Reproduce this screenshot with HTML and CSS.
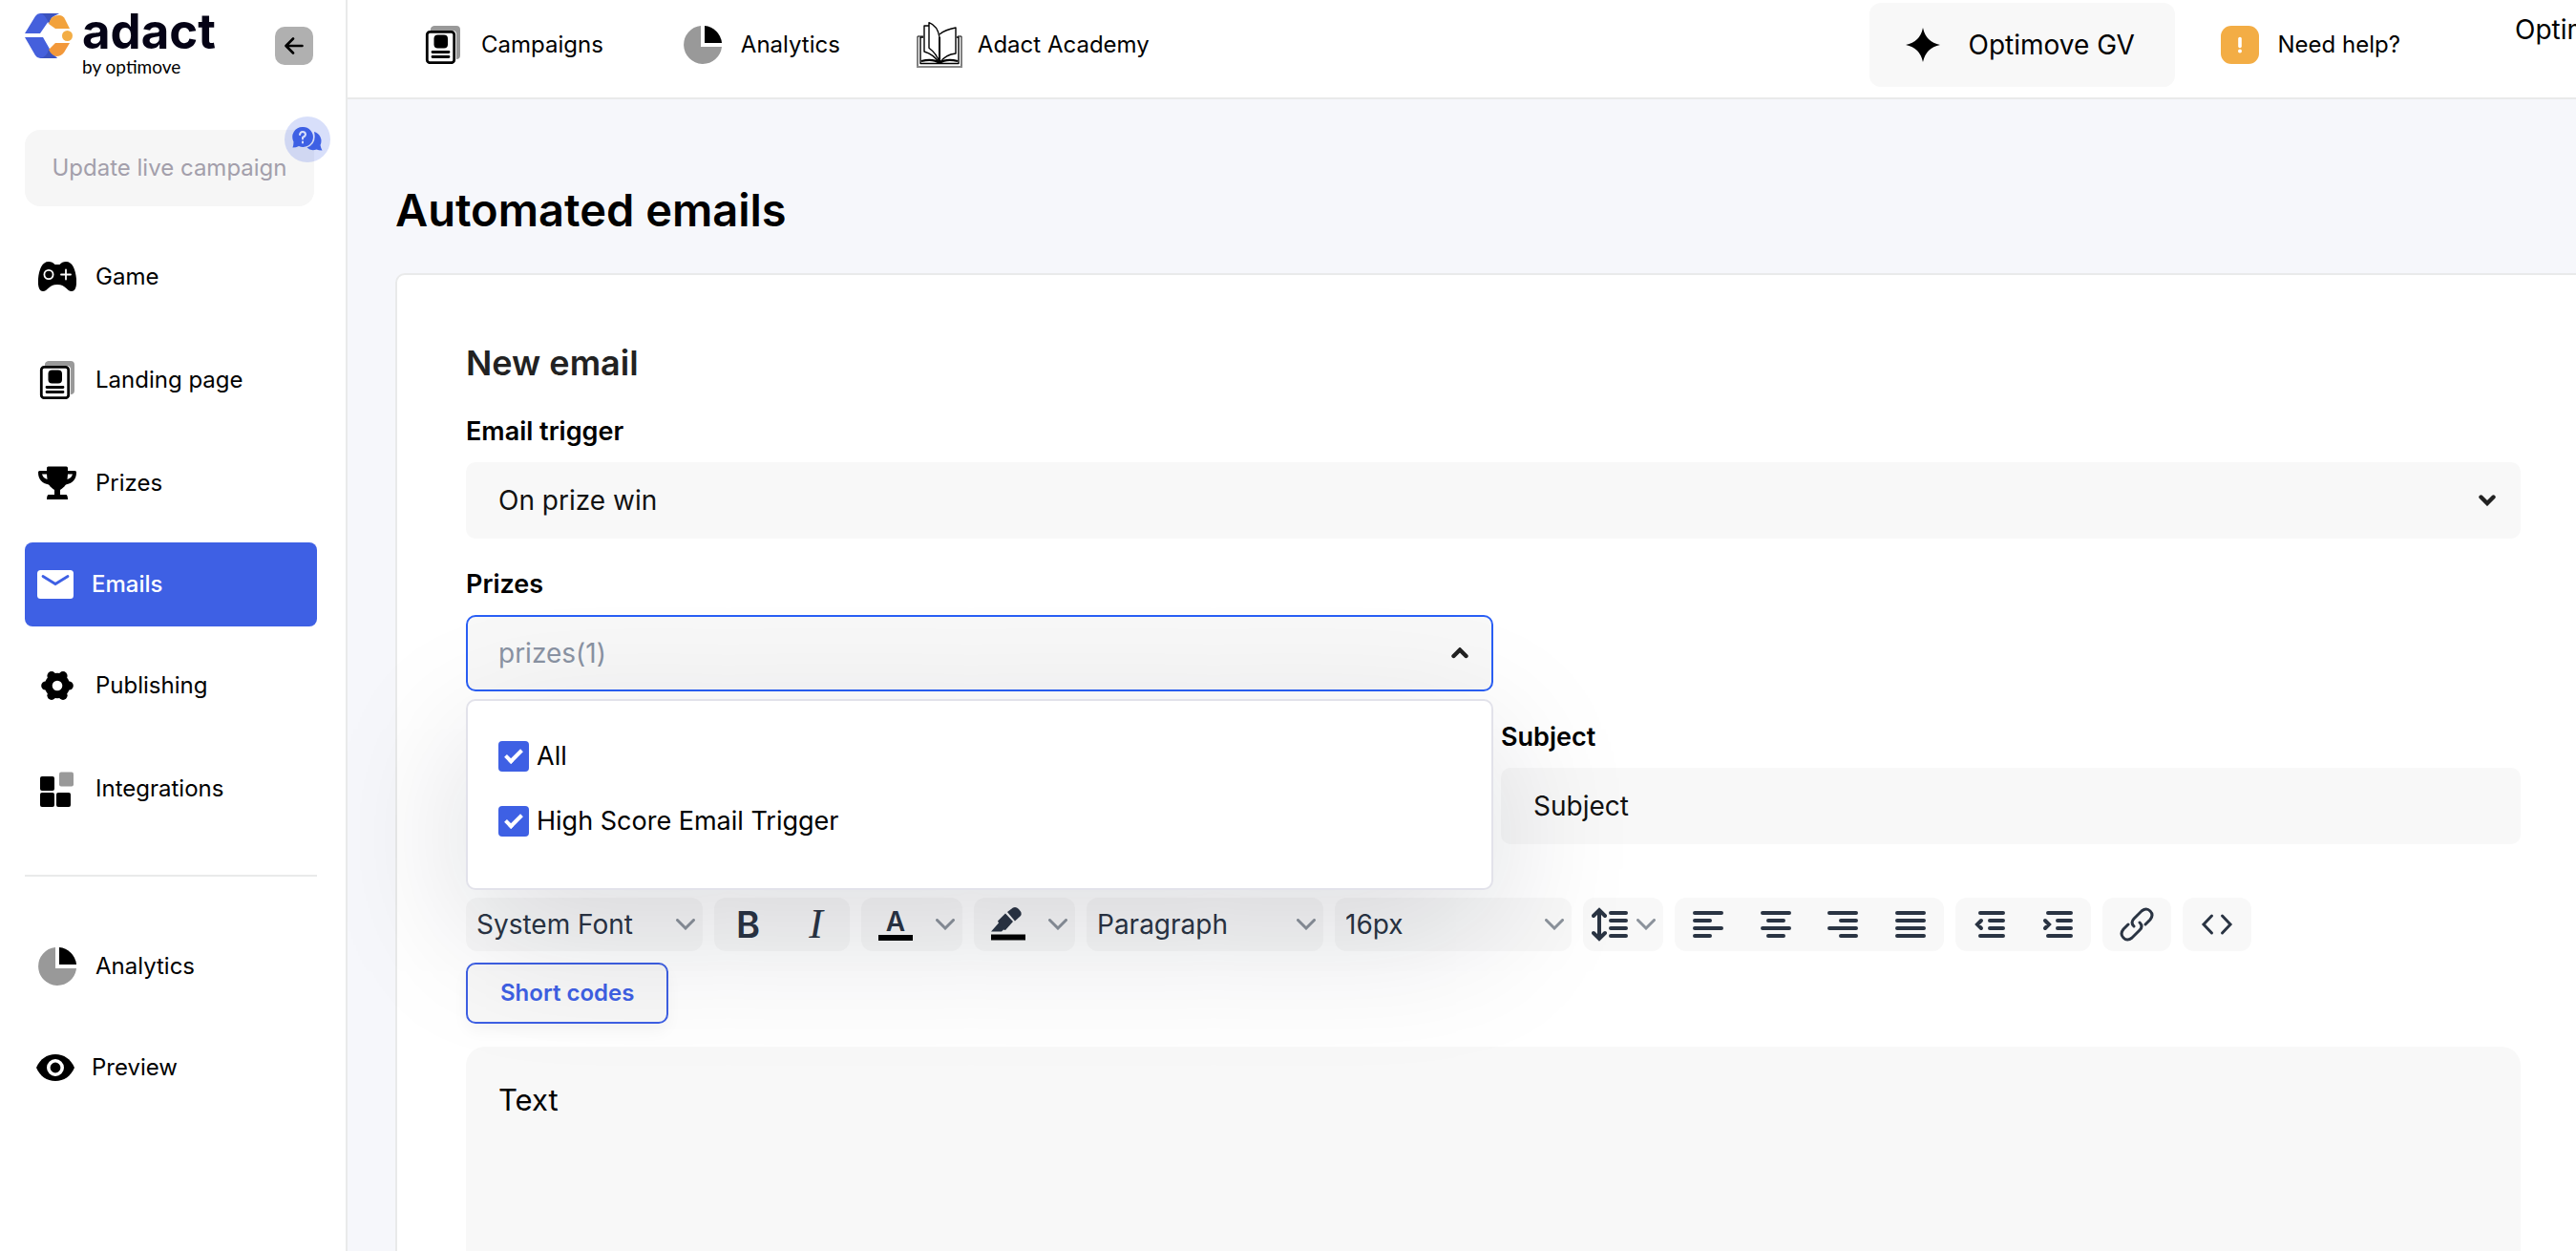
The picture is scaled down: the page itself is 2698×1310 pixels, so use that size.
FILE: index.html
```html
<!DOCTYPE html>
<html lang="en">
<head>
<meta charset="utf-8">
<meta name="viewport" content="width=device-width, initial-scale=1">
<title>Automated emails</title>
<link rel="stylesheet" href="styles.css">
</head>
<body>
<svg class="sprite" aria-hidden="true">
  <symbol id="i-page" viewBox="0 0 40 40">
    <path d="M11 0h23a4 4 0 0 1 4 4v27a4 4 0 0 1-4 4V9a4 4 0 0 0-4-4H7a4 4 0 0 1 4-5z" fill="#999"/>
    <rect x="3.300" y="6.300" width="28.400" height="32.400" rx="3" fill="#fff" stroke="#000" stroke-width="2.800"/>
    <rect x="10.500" y="9.500" width="14.500" height="14" rx="4"/>
    <path d="M9 27.500h17M9 32.500h17" stroke="#000" stroke-width="2.800" stroke-linecap="round"/>
  </symbol>
  <symbol id="i-pie" viewBox="0 0 40 40">
    <path d="M18 0v22h22A20 20 0 1 1 18 0z" fill="#999"/>
    <path d="M22 0a20 20 0 0 1 18 18H22z"/>
  </symbol>
  <symbol id="i-chevron" viewBox="0 0 20 12">
    <path d="M1.500 1.500l8.500 8.500 8.500-8.500" fill="none" stroke="currentColor" stroke-width="3" stroke-linecap="round"/>
  </symbol>
</svg>

<div class="app">
  <aside class="sidebar">
    <div class="brand">
      <a class="logo" href="#" aria-label="adact by optimove">
        <svg class="logo-mark" viewBox="0 0 50 48" aria-hidden="true">
          <path d="M16 0h20l-9 5-11 16H0L11 3q2-3 5-3z" fill="#4560dc"/>
          <path d="M16 0h20q-6 0-9 7l-2 4Q22 1 16 0z" fill="#3b52bd"/>
          <path d="M0 25h19l8 14 7 8H16q-3 0-5-3z" fill="#4560dc"/>
          <path d="M25 37q-1 8-9 10h18q-4-1-9-10z" fill="#3b52bd"/>
          <path d="M27 6q3-4 9-4 4 0 6 4l5 10H32L25 11z" fill="#f2a23c"/>
          <path d="M32 31h15l-6 10q-3 4-8 4-5-1-8-7z" fill="#f2983a"/>
          <circle cx="44.500" cy="23.500" r="5.500" fill="#f3ad45"/>
        </svg>
        <span class="logo-text">
          <span class="logo-name">adact</span>
          <span class="logo-by">by optimove</span>
        </span>
      </a>
      <button class="collapse" type="button" aria-label="Collapse menu">
        <svg width="20" height="18" viewBox="0 0 20 18"><path d="M18.500 9H2M9 1.500L1.500 9 9 16.500" fill="none" stroke="#000" stroke-width="2.600" stroke-linecap="round" stroke-linejoin="round"/></svg>
      </button>
    </div>

    <div class="publish">
      <button class="update" type="button" disabled>Update live campaign</button>
      <a class="hint" href="#" aria-label="Help">
        <svg width="32" height="26" viewBox="0 0 32 26" fill="#3e60e4">
          <path d="M11 0a10.500 10.500 0 1 1-4 20q-3 1.500-6.500 1.500Q1.500 19 1.500 15.500A10.500 10.500 0 0 1 11 0z"/>
          <path d="M23 5a10 10 0 0 1 6.500 14q.5 3 2 5.500-4 0-6-1-6 2-10-2Q26 18 23 5z"/>
          <path d="M8 8q.5-3 3-3t3 2.500q0 2-3 3.500v1.500M11 15.500v1" fill="none" stroke="#d8dffa" stroke-width="2" stroke-linecap="round"/>
        </svg>
      </a>
    </div>

    <nav class="nav" aria-label="Campaign">
      <a class="nav-item" href="#">
        <svg class="icon" viewBox="0 0 40 40"><path d="M11 4q4 0 6.500 3h5Q25 4 29 4c7 0 10 8 11 18 .5 8-1 13-5 13-5 0-6-7-15-7S10 35 5 35c-4 0-5.500-5-5-13C1 12 4 4 11 4z"/><circle cx="11" cy="17.500" r="4.600" fill="none" stroke="#fff" stroke-width="1.800"/><path d="M29 12.500v10M24 17.500h10" stroke="#fff" stroke-width="1.800" stroke-linecap="round"/></svg>
        <span>Game</span>
      </a>
      <a class="nav-item" href="#"><svg class="icon"><use href="#i-page"/></svg><span>Landing page</span></a>
      <a class="nav-item" href="#">
        <svg class="icon" viewBox="0 0 40 40"><path d="M9 4q0-1.500 1.500-1.500h19Q31 2.500 31 4v3h7.500Q40 7 40 8.500C40 16 36 20 29 21.500c-2 2.500-3 3.500-6 5.500v5h6.500q1.500 1 1.500 5H9q0-4 1.500-5H17v-5c-3-2-4-3-6-5.500C4 20 0 16 0 8.500Q0 7 1.500 7H9zM4 10.500q1 4 5.500 5.500L9 10.500zm32 0h-5l-.5 5.500q4.500-1.500 5.500-5.500z" fill-rule="evenodd"/></svg>
        <span>Prizes</span>
      </a>
      <a class="nav-item nav-item-compact nav-item-active" href="#" aria-current="page">
        <svg class="icon" viewBox="0 0 40 40"><rect x="1" y="5" width="38" height="30" rx="3.500" fill="#fff"/><path d="M7 11.500l13 8 13-8" fill="none" stroke="#3e60e4" stroke-width="2.800" stroke-linecap="round"/></svg>
        <span>Emails</span>
      </a>
      <a class="nav-item" href="#">
        <svg class="icon" viewBox="0 0 40 40">
          <circle cx="20" cy="20" r="13.200"/>
          <circle cx="32.200" cy="20" r="4.600"/><circle cx="7.800" cy="20" r="4.600"/>
          <circle cx="26" cy="30.300" r="4.600"/><circle cx="14" cy="30.300" r="4.600"/>
          <circle cx="26" cy="9.700" r="4.600"/><circle cx="14" cy="9.700" r="4.600"/>
          <circle cx="20" cy="20" r="5.300" fill="#fff"/>
        </svg>
        <span>Publishing</span>
      </a>
      <a class="nav-item" href="#">
        <svg class="icon" viewBox="0 0 40 40"><rect x="2" y="7" width="15" height="15" rx="2"/><rect x="2" y="24" width="15" height="15" rx="2"/><rect x="19" y="24" width="15" height="15" rx="2"/><rect x="22" y="2.500" width="15" height="15" rx="2" fill="#999"/></svg>
        <span>Integrations</span>
      </a>
    </nav>
    <hr class="divider">
    <nav class="nav" aria-label="Results">
      <a class="nav-item" href="#"><svg class="icon"><use href="#i-pie"/></svg><span>Analytics</span></a>
      <a class="nav-item nav-item-compact" href="#">
        <svg class="icon" viewBox="0 0 40 40"><path d="M0 20C4 11 11 6 20 6s16 5 20 14c-4 9-11 14-20 14S4 29 0 20z"/><circle cx="20" cy="20" r="7.200" fill="#000" stroke="#fff" stroke-width="3.600"/></svg>
        <span>Preview</span>
      </a>
    </nav>
  </aside>

  <div class="main">
    <header class="topbar">
      <nav class="topnav" aria-label="Main">
        <a class="toplink" href="#"><svg class="icon"><use href="#i-page"/></svg><span>Campaigns</span></a>
        <a class="toplink" href="#"><svg class="icon"><use href="#i-pie"/></svg><span>Analytics</span></a>
        <a class="toplink toplink-book" href="#">
          <svg width="48" height="48" viewBox="0 0 48 48" fill="none" stroke="#000" stroke-width="1.400" stroke-linejoin="round">
            <path d="M7 15H1v31.500h46V15h-4" stroke-width="1"/>
            <path d="M0 47h48" stroke="#888" stroke-width="2"/>
            <path d="M7 16H4v27.500h40V16h-2"/>
            <path d="M13 4H8v27q10 3 16 12"/>
            <path d="M13 0.700v26.500q8 6 11 15V16Q22 4 13 .7z"/>
            <path d="M24 13q6-5 17-7v27q-11 1-17 10"/>
            <path d="M5 41q12-3 19 2 7-5 19-2" stroke-width="2"/>
            <path d="M24 16v27" stroke-width="2"/>
          </svg>
          <span>Adact Academy</span>
        </a>
      </nav>
      <div class="topend">
        <button class="workspace" type="button">
          <svg width="36" height="36" viewBox="0 0 36 36" aria-hidden="true"><path d="M18 0q3 15 18 18-15 3-18 18-3-15-18-18Q15 15 18 0z"/></svg>
          <span>Optimove GV</span>
        </button>
        <a class="toplink" href="#">
          <svg class="icon" viewBox="0 0 40 40"><rect width="40" height="40" rx="11" fill="#f3ad45"/><path d="M20 13.500v8" stroke="#fff" stroke-width="3.600" stroke-linecap="round"/><circle cx="20" cy="26.500" r="2" fill="#fff"/></svg>
          <span>Need help?</span>
        </a>
        <a class="account" href="#">Optimove</a>
      </div>
    </header>

    <main class="content">
      <h1 class="title">Automated emails</h1>
      <form class="card">
        <h2 class="subtitle">New email</h2>

        <div class="field">
          <label class="label" for="trigger">Email trigger</label>
          <div class="control">
            <select class="input" id="trigger"><option>On prize win</option></select>
            <svg class="caret" viewBox="0 0 18 12"><path d="M2.500 2.500L9 9l6.500-6.500" fill="none" stroke="#222" stroke-width="4.400" stroke-linecap="round"/></svg>
          </div>
        </div>

        <div class="columns">
          <div class="field field-prizes">
            <label class="label" for="prizes">Prizes</label>
            <div class="control">
              <button class="input input-open" id="prizes" type="button" aria-expanded="true">prizes(1)</button>
              <svg class="caret" viewBox="0 0 18 12"><path d="M2.500 9L9 2.500 15.500 9" fill="none" stroke="#222" stroke-width="4.400" stroke-linecap="round"/></svg>
              <div class="menu">
                <label class="check"><input type="checkbox" checked><span>All</span></label>
                <label class="check"><input type="checkbox" checked><span>High Score Email Trigger</span></label>
              </div>
            </div>
          </div>
          <div class="field field-subject">
            <label class="label" for="subject">Subject</label>
            <input class="input" id="subject" type="text" value="Subject">
          </div>
        </div>

        <div class="toolbar" role="toolbar" aria-label="Formatting">
          <div class="group group-select">
            <select aria-label="Font"><option>System Font</option></select>
            <svg class="arrow"><use href="#i-chevron"/></svg>
          </div>
          <div class="group group-pair">
            <button class="tool tool-bold" type="button" aria-label="Bold">B</button>
            <button class="tool tool-italic" type="button" aria-label="Italic">I</button>
          </div>
          <div class="group group-split">
            <button class="tool tool-color" type="button" aria-label="Text color">A</button>
            <svg class="arrow"><use href="#i-chevron"/></svg>
          </div>
          <div class="group group-split">
            <button class="tool" type="button" aria-label="Highlight color">
              <svg width="36" height="36" viewBox="0 0 36 36"><path d="M0 25.500l8-9-1-2 8-8 8 8.500-8 9-2-.5-2 2z" fill="#2a3443"/><path d="M17 5l6-4.500q3-1.500 6 1.500 4 4 2 7l-6 5.500z" fill="#2a3443"/><path d="M0 28.500h36v6H0z" fill="#000"/></svg>
            </button>
            <svg class="arrow"><use href="#i-chevron"/></svg>
          </div>
          <div class="group group-select">
            <select aria-label="Block format"><option>Paragraph</option></select>
            <svg class="arrow"><use href="#i-chevron"/></svg>
          </div>
          <div class="group group-select">
            <select aria-label="Font size"><option>16px</option></select>
            <svg class="arrow"><use href="#i-chevron"/></svg>
          </div>
          <div class="group group-height">
            <button class="tool" type="button" aria-label="Line height">
              <svg width="40" height="36" viewBox="0 0 40 36" class="lines"><path d="M8 4v28M2 9l6-6 6 6M2 27l6 6 6-6M20 6h16M20 14h16M20 22h16M20 30h16"/></svg>
            </button>
            <svg class="arrow"><use href="#i-chevron"/></svg>
          </div>
          <div class="group group-align">
            <button class="tool" type="button" aria-label="Align left"><svg width="36" height="36" viewBox="0 0 36 36" class="lines"><path d="M4 6h28M4 14h16M4 22h28M4 30h16"/></svg></button>
            <button class="tool" type="button" aria-label="Align center"><svg width="36" height="36" viewBox="0 0 36 36" class="lines"><path d="M4 6h28M10 14h16M4 22h28M10 30h16"/></svg></button>
            <button class="tool" type="button" aria-label="Align right"><svg width="36" height="36" viewBox="0 0 36 36" class="lines"><path d="M4 6h28M16 14h16M4 22h28M16 30h16"/></svg></button>
            <button class="tool" type="button" aria-label="Justify"><svg width="36" height="36" viewBox="0 0 36 36" class="lines"><path d="M4 6h28M4 14h28M4 22h28M4 30h28"/></svg></button>
          </div>
          <div class="group group-pair">
            <button class="tool" type="button" aria-label="Outdent"><svg width="36" height="36" viewBox="0 0 36 36" class="lines"><path d="M8 6h24M18 14h14M18 22h14M8 30h24M9 14l-4 4 4 4"/></svg></button>
            <button class="tool" type="button" aria-label="Indent"><svg width="36" height="36" viewBox="0 0 36 36" class="lines"><path d="M8 6h24M18 14h14M18 22h14M8 30h24M5 14l4 4-4 4"/></svg></button>
          </div>
          <div class="group group-single">
            <button class="tool" type="button" aria-label="Link"><svg width="38" height="38" viewBox="0 0 38 38" class="lines lines-thin"><path d="M16 21q-4-4 0-8l8-8q5-4 9 0t0 9l-5 5M22 17q4 4 0 8l-8 8q-5 4-9 0t0-9l5-5"/></svg></button>
          </div>
          <div class="group group-single">
            <button class="tool" type="button" aria-label="Source code"><svg width="36" height="36" viewBox="0 0 36 36" class="lines lines-thin"><path d="M12.500 9L4 18l8.500 9M23.500 9l8.500 9-8.500 9"/></svg></button>
          </div>
        </div>

        <button class="shortcodes" type="button">Short codes</button>
        <textarea class="editor" aria-label="Email text">Text</textarea>
      </form>
    </main>
  </div>
</div>
</body>
</html>
```
FILE: styles.css
```css
:root {
  --blue: #3e60e4;
  --ink: #2a3443;
  --field: #f8f8f8;
  --line: #e9eaea;
}

*,
*::before,
*::after {
  box-sizing: border-box;
}

body {
  margin: 0;
  background: #f6f7fb;
  color: #000;
  font: 24px/32px Inter, "Liberation Sans", sans-serif;
}

button,
input,
select,
textarea {
  margin: 0;
  border: 0;
  background: none;
  color: inherit;
  font: inherit;
}

button {
  padding: 0;
}

select {
  appearance: none;
}

a {
  color: inherit;
  text-decoration: none;
}

svg {
  flex: none;
  display: block;
}

.sprite {
  position: absolute;
  width: 0;
  height: 0;
}

.icon {
  width: 40px;
  height: 40px;
}

.app {
  display: grid;
  grid-template-columns: 364px minmax(0, 1fr);
  height: 100vh;
  overflow: hidden;
}

/* Sidebar */

.sidebar {
  border-right: 2px solid var(--line);
  background: #fff;
  padding: 12px 30px 0 26px;
}

.brand {
  display: flex;
  justify-content: space-between;
  align-items: flex-start;
  padding-right: 4px;
  height: 124px;
}

.logo {
  display: flex;
  gap: 10px;
}

.logo-mark {
  width: 50px;
  height: 48px;
  margin-top: 2px;
}

.logo-text {
  display: flex;
  flex-direction: column;
}

.logo-name {
  color: #050316;
  font-size: 51px;
  font-weight: 700;
  line-height: 42px;
}

.logo-by {
  font: 19px/32px Lato, sans-serif;
}

.collapse {
  display: grid;
  place-items: center;
  width: 40px;
  height: 40px;
  margin-top: 16px;
  border-radius: 10px;
  background: #b0b0b0;
}

.publish {
  position: relative;
  padding-right: 3px;
}

.update {
  width: 100%;
  height: 80px;
  border-radius: 16px;
  background: #f6f6f6;
  color: #a39fab;
  font-size: 24px;
}

.hint {
  position: absolute;
  top: -14px;
  right: -14px;
  display: grid;
  place-items: center;
  width: 48px;
  height: 48px;
  border-radius: 50%;
  background: rgba(62, 96, 228, 0.2);
}

.nav {
  display: flex;
  flex-direction: column;
  gap: 20px;
  margin-top: 30px;
}

.nav-item {
  display: flex;
  align-items: center;
  gap: 20px;
  height: 88px;
  padding: 0 14px;
  border-radius: 8px;
}

.nav-item-compact {
  gap: 18px;
  margin: -2px 0;
  padding: 0 12px;
}

.nav-item-active {
  background: var(--blue);
  color: #fff;
  font-weight: 500;
}

.divider {
  margin: 46px 0 50px;
  border: 0;
  border-top: 2px solid var(--line);
}

.divider + .nav {
  margin-top: 0;
}

/* Top bar */

.main {
  display: flex;
  flex-direction: column;
  overflow: hidden;
}

.topbar {
  display: flex;
  flex: none;
  justify-content: space-between;
  height: 104px;
  border-bottom: 2px solid var(--line);
  background: #fff;
  padding: 3px 0 0 80px;
}

.topnav,
.topend {
  display: flex;
  align-items: center;
  height: 88px;
}

.topnav {
  gap: 84px;
}

.toplink {
  display: flex;
  align-items: center;
  gap: 20px;
  white-space: nowrap;
}

.toplink-book {
  gap: 16px;
  margin-left: -4px;
}

.workspace {
  display: flex;
  align-items: center;
  gap: 30px;
  width: 320px;
  height: 88px;
  margin-right: 48px;
  padding: 0 38px;
  border-radius: 12px;
  background: var(--field);
  font-size: 28px;
  white-space: nowrap;
}

.account {
  align-self: flex-start;
  width: 64px;
  margin: 12px 0 0 120px;
  overflow: hidden;
  font-size: 28px;
}

/* Content */

.content {
  flex: 1;
  padding: 84px 0 0 50px;
}

.title {
  margin: 0 0 34px;
  font-size: 47px;
  font-weight: 600;
  line-height: 64px;
}

.card {
  margin-right: -14px;
  border: 2px solid var(--line);
  border-radius: 10px;
  background: #fff;
  padding: 68px 70px 68px 72px;
}

.subtitle {
  margin: 0 0 30px;
  color: #222;
  font-size: 36px;
  font-weight: 600;
  line-height: 48px;
}

.field {
  margin-bottom: 30px;
}

.label {
  display: block;
  margin-bottom: 14px;
  font-size: 27px;
  font-weight: 600;
  line-height: 36px;
}

.control {
  position: relative;
}

.input {
  display: block;
  width: 100%;
  height: 80px;
  border-radius: 10px;
  background: var(--field);
  padding: 0 34px;
  color: #111;
  font-size: 28px;
  text-align: left;
}

.input-open {
  border: 2px solid #2a5ff5;
  padding: 0 32px;
  color: #8a93a3;
}

.caret {
  position: absolute;
  top: 34px;
  right: 26px;
  width: 18px;
  height: 12px;
}

.columns {
  display: grid;
  grid-template-columns: 1fr 1fr;
  align-items: end;
  padding-bottom: 56px;
}

.field-prizes {
  margin-bottom: 160px;
}

.field-subject {
  margin: 0 0 0 8px;
}

.menu {
  position: absolute;
  z-index: 2;
  top: 88px;
  left: 0;
  right: 0;
  display: flex;
  flex-direction: column;
  gap: 36px;
  height: 200px;
  border: 2px solid #e2e2ea;
  border-radius: 10px;
  background: #fff;
  padding: 42px 32px;
  box-shadow: 0 44px 150px rgba(15, 23, 42, 0.15);
}

.check {
  display: flex;
  align-items: center;
  gap: 8px;
  font-size: 27px;
}

.check input {
  appearance: none;
  width: 32px;
  height: 32px;
  border-radius: 4px;
  background: var(--blue);
}

.check input:checked::before {
  content: "";
  display: block;
  width: 18px;
  height: 10px;
  margin: 9px 0 0 7px;
  border: solid #fff;
  border-width: 0 0 4px 4px;
  transform: rotate(-45deg);
}

/* Editor */

.toolbar {
  display: flex;
  flex-wrap: wrap;
  gap: 12px;
  margin-bottom: 12px;
  color: var(--ink);
}

.group {
  position: relative;
  display: flex;
  height: 56px;
  border-radius: 12px;
  background: var(--field);
}

.group-select {
  width: 248px;
}

.group-select select {
  width: 100%;
  padding: 0 11px;
  font-size: 28px;
}

.group-pair {
  width: 142px;
}

.group-split {
  width: 106px;
  padding-right: 34px;
}

.group-height {
  width: 84px;
  padding-right: 26px;
}

.group-align {
  width: 282px;
}

.group-single {
  width: 72px;
}

.tool {
  flex: 1;
  display: grid;
  place-items: center;
}

.tool-bold {
  font-size: 38px;
  font-weight: 600;
}

.tool-italic {
  font: italic 44px/56px "Liberation Serif", serif;
}

.tool-color {
  align-content: center;
  font-size: 28px;
  font-weight: 600;
  line-height: 28px;
}

.tool-color::after {
  content: "";
  width: 36px;
  height: 6px;
  background: #000;
}

.arrow {
  position: absolute;
  top: 22px;
  right: 8px;
  width: 20px;
  height: 12px;
  color: #8b929b;
  pointer-events: none;
}

.lines {
  fill: none;
  stroke: currentColor;
  stroke-width: 4;
  stroke-linecap: round;
}

.lines-thin {
  stroke-width: 3;
}

.shortcodes {
  display: block;
  height: 64px;
  margin-bottom: 24px;
  border: 2px solid var(--blue);
  border-radius: 10px;
  background: var(--field);
  padding: 0 34px;
  color: var(--blue);
  font-size: 24px;
  font-weight: 600;
  box-shadow: 0 8px 16px rgba(0, 0, 0, 0.04);
}

.editor {
  display: block;
  width: 100%;
  height: 480px;
  border-radius: 20px;
  background: var(--field);
  padding: 36px 34px;
  font-size: 31px;
  line-height: 40px;
  resize: none;
}
```
